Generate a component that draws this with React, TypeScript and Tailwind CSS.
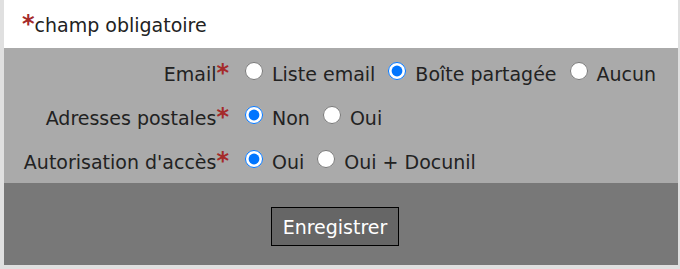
import React from "react";

const Star = () => <span className="text-[24px] font-bold leading-[0] text-[#a52a2a]">*</span>;

function Radio({ checked }: { checked?: boolean }) {
  return (
    <input
      type="radio"
      checked={!!checked}
      readOnly
      className="w-[18px] h-[18px] m-0 mb-[6px] shrink-0 accent-[#0075ff]"
    />
  );
}

function Opt({ label, checked, first }: { label: string; checked?: boolean; first?: boolean }) {
  return (
    <div className={`flex items-center ${first ? "ml-[16px]" : "ml-[13px]"}`}>
      <Radio checked={checked} />
      <span className="ml-[9px] whitespace-pre">{label}</span>
    </div>
  );
}

function Row({ label, children }: { label: string; children: React.ReactNode }) {
  return (
    <div className="flex items-center h-[44px]">
      <div className="w-[225px] text-right whitespace-pre">
        {label}
        <Star />
      </div>
      {children}
    </div>
  );
}

export default function App() {
  return (
    <div
      className="w-[680px] h-[269px] bg-[#e0e0e0] pl-[4px] pr-[2px] pb-[4px] flex flex-col text-[19px] leading-[22px] text-[#222]"
      style={{ fontFamily: '"DejaVu Sans", Verdana, sans-serif' }}
    >
      <div className="bg-white h-[48px] pt-[14px] pl-[18px] whitespace-pre">
        <Star />
        champ obligatoire
      </div>
      <div className="bg-[#aaaaaa] h-[135px] pt-[4px]">
        <Row label="Email">
          <Opt first label="Liste email" />
          <Opt label="Boîte partagée" checked />
          <Opt label="Aucun" />
        </Row>
        <Row label="Adresses postales">
          <Opt first label="Non" checked />
          <Opt label="Oui" />
        </Row>
        <Row label="Autorisation d'accès">
          <Opt first label="Oui" checked />
          <Opt label="Oui + Docunil" />
        </Row>
      </div>
      <div className="bg-[#787878] flex-1 pt-[24px] pl-[267px]">
        <button className="w-[128px] h-[39px] bg-[#666666] border border-black text-white text-[19px] leading-[22px]">
          Enregistrer
        </button>
      </div>
    </div>
  );
}
